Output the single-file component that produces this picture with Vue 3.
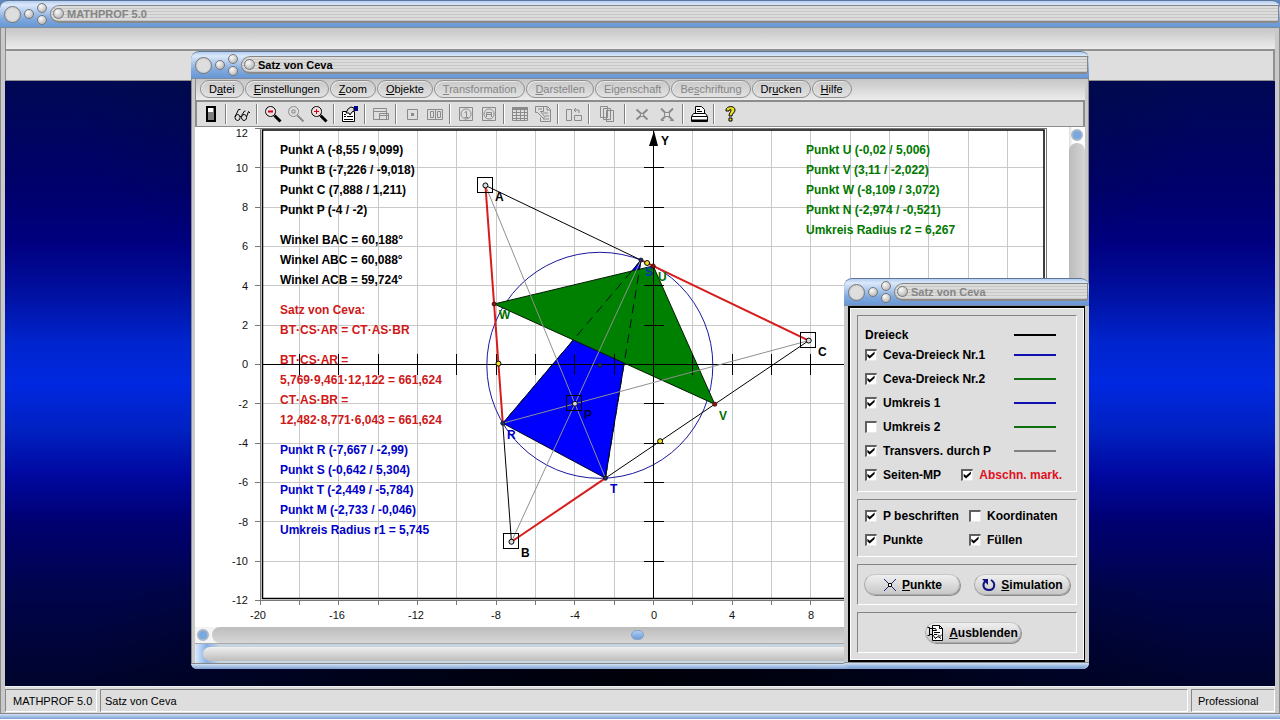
<script setup>
import { computed, ref } from 'vue'

const menus = [
  { pre: 'D', key: 'a', post: 'tei' },
  { pre: '', key: 'E', post: 'instellungen' },
  { pre: '', key: 'Z', post: 'oom' },
  { pre: '', key: 'O', post: 'bjekte' },
  { pre: '', key: 'T', post: 'ransformation', off: true },
  { pre: '', key: 'D', post: 'arstellen', off: true },
  { pre: 'Ei', key: 'g', post: 'enschaft', off: true },
  { pre: 'Be', key: 's', post: 'chriftung', off: true },
  { pre: 'Dr', key: 'u', post: 'cken' },
  { pre: '', key: 'H', post: 'ilfe' },
]

const G = '#8a8a8a'
const K = '#000'
const N = 'none'
// Every icon is a list of [path, stroke, fill, stroke width] on an 18 x 18 grid.
const tools = [
  [{ name: 'Beenden', icon: [['M4 1h10v16H4z', N, K], ['M6 3h6v12H6z', N, '#808080'], ['M6 3h5v4H6z', N, '#fff']] }],
  [{ name: 'Ansicht', icon: [['M4.500 9.500a2.500 3 0 1 0 .1 0zM11 9.500a2.500 3 0 1 0 .1 0zM2 12L5.500 4.500h2M7 12q1-2 1.500 0M8.500 10.500L11.500 6h1M13.500 12L15.500 6.500 17 8', K, N]] }],
  [
    { name: 'Verkleinern', icon: [['M10.500 10.500l6 6', K, N, 3], ['M6.500 1.500a5 5 0 1 0 .1 0z', K, '#f0e0e0', 1], ['M4 6.500h5', '#d00020', N, 2]] },
    { name: 'Zoom', off: true, icon: [['M10.500 10.500l6 6', G, N, 2], ['M6.500 1.500a5 5 0 1 0 .1 0z', G, N], ['M5 5h3v3H5z', G, N]] },
    { name: 'Vergrößern', icon: [['M10.500 10.500l6 6', K, N, 3], ['M6.500 1.500a5 5 0 1 0 .1 0z', K, '#f0e0e0', 1], ['M4 6.500h5M6.500 4v5', '#d00020', N, 1]] },
  ],
  [{ name: 'Eigenschaften', icon: [['M1.500 6.500h12v10h-12z', K, '#fff'], ['M3 9.500h2M6 11.500h6M3 11.500h2M3 14.500h9', K, N], ['M13 1h4v5h-4z', N, '#000090'], ['M5 8l2-4 3-2 3 1v3l-2 1-2 3-1-2z', K, '#dedede']] }],
  [{ name: 'Tabelle', off: true, icon: [['M1.500 3.500h13v11h-13zM1 6.500h14M7.500 8.500h9v6h-9zM7 10.500h10', G, N]] }],
  [
    { name: 'Punkt', off: true, icon: [['M4.500 4.500h10v10h-10z', G, N], ['M8 8h3v3H8z', N, G]] },
    { name: 'Punkte', off: true, icon: [['M1.500 4.500h15v10h-15zM4.500 6.500h3v6h-3zM11.500 6.500h3v6h-3zM9.500 5v9', G, N]] },
  ],
  [
    { name: 'Kreis 1', off: true, icon: [['M2.500 2.500h13v13h-13zM9 4a5 5 0 1 0 .1 0zM7.500 7.500l2-1v5.500M7.500 12.500h4', G, N]] },
    { name: 'Kreis 2', off: true, icon: [['M2.500 2.500h13v13h-13zM9 4a5 5 0 1 0 .1 0zM6.500 12V7.500h5V12M6.500 9.500h5', G, N]] },
  ],
  [
    { name: 'Wertetabelle', off: true, icon: [['M1.500 2.500h15v13h-15z', G, N], ['M1 2h16v3H1z', N, G], ['M1 7.500h16M1 10.500h16M1 13.500h16M5.500 5v11M9.500 5v11M13.500 5v11', G, N]] },
    { name: 'Bericht', off: true, icon: [['M5.500 1.500h8l3 3v12h-10v-4M13 2v3h3M1.500 1.500h8v5h-3l4 5-1 2-6-6H1.500zM4 4h4M9 8h5M11 11h4M9 14h6', G, N]] },
  ],
  [{ name: 'Drehen', off: true, icon: [['M1.500 4.500h5v11h-5zM9.500 10.500h7v5h-7zM11 3l-2 2 2 2M9 5h5v3', G, N]] }],
  [{ name: 'Kopieren', wide: true, off: true, icon: [['M2.500 1.500h7v11h-7zM5.500 3.500h7v11h-7zM8.500 5.500h7v11h-7z', G, '#dedede']] }],
  [
    { name: 'Schnittpunkt', mid: true, off: true, icon: [['M3.500 4.500l11 10M14.500 4.500l-11 10', G, N, 2], ['M7.500 8.500h3v3h-3z', G, '#dedede']] },
    { name: 'Schnittpunkte', mid: true, off: true, icon: [['M3 3.500l12 12M15 3.500l-12 12', G, N, 2], ['M6.500 7.500h5v4h-5z', G, '#dedede'], ['M3 15.500h3M12 15.500h4', G, N]] },
  ],
  [{ name: 'Drucken', icon: [['M5.500 8.500v-7h6l3 3v4', K, '#fff'], ['M7 4.500h3M7 6.500h5', K, N], ['M3.500 8.500h12l2 3v5h-16v-5z', K, '#fff'], ['M2 11.500h15', K, N], ['M2 15.500h15', K, N, 2]] }],
  [{ name: 'Hilfe', icon: [['M5 5c0-4 9-5 9 0 0 3-3 3-3 6H8c0-3 2-4 2-6 0-1-2-1-2 1H5zM8 13h3v3H8z', K, '#e8e020']] }],
]

// Plot transform
const unit = 19.67
const X = (x) => 653.6 + unit * x
const Y = (y) => 364.4 - unit * y
const pt = (x, y) => ({ x: X(x), y: Y(y) })
const A = pt(-8.55, 9.099)
const B = pt(-7.226, -9.018)
const C = pt(7.888, 1.211)
const P = pt(-4, -2)
const R = pt(-7.667, -2.99)
const S = pt(-0.642, 5.304)
const T = pt(-2.449, -5.784)
const U = pt(-0.02, 5.006)
const V = pt(3.11, -2.022)
const W = pt(-8.109, 3.072)
const M = pt(-2.733, -0.046)
const mids = [pt(-7.888, 0.04), pt(0.331, -3.904), pt(-0.331, 5.155)]
const poly = (...p) => p.map((q) => `${q.x},${q.y}`).join(' ')
const evens = Array.from({ length: 19 }, (_, i) => -18 + 2 * i)
const yVals = Array.from({ length: 13 }, (_, i) => -12 + 2 * i)
const xLabels = [-20, -16, -12, -8, -4, 0, 4, 8, 12, 16, 20]

const leftText = [
  [154, '#000', 'Punkt A (-8,55 / 9,099)'],
  [174, '#000', 'Punkt B (-7,226 / -9,018)'],
  [194, '#000', 'Punkt C (7,888 / 1,211)'],
  [214, '#000', 'Punkt P (-4 / -2)'],
  [244, '#000', 'Winkel BAC = 60,188°'],
  [264, '#000', 'Winkel ABC = 60,088°'],
  [284, '#000', 'Winkel ACB = 59,724°'],
  [314, '#d01818', 'Satz von Ceva:'],
  [334, '#d01818', 'BT·CS·AR = CT·AS·BR'],
  [364, '#d01818', 'BT·CS·AR ='],
  [384, '#d01818', '5,769·9,461·12,122 = 661,624'],
  [404, '#d01818', 'CT·AS·BR ='],
  [424, '#d01818', '12,482·8,771·6,043 = 661,624'],
  [454, '#0000c8', 'Punkt R (-7,667 / -2,99)'],
  [474, '#0000c8', 'Punkt S (-0,642 / 5,304)'],
  [494, '#0000c8', 'Punkt T (-2,449 / -5,784)'],
  [514, '#0000c8', 'Punkt M (-2,733 / -0,046)'],
  [534, '#0000c8', 'Umkreis Radius r1 = 5,745'],
]
const rightText = [
  'Punkt U (-0,02 / 5,006)',
  'Punkt V (3,11 / -2,022)',
  'Punkt W (-8,109 / 3,072)',
  'Punkt N (-2,974 / -0,521)',
  'Umkreis Radius r2 = 6,267',
]
const marks = [
  ['A', 495, 201, '#000'], ['B', 521, 557, '#000'], ['C', 818, 356, '#000'],
  ['P', 584, 419, '#000040'], ['R', 507, 439, '#0000c8'], ['S', 645, 276, '#0038b0'],
  ['T', 610, 493, '#0000c8'], ['U', 658, 281, '#007000'], ['V', 719, 420, '#007000'],
  ['W', 499, 319, '#007000'],
]

const options = ref([
  { label: 'Ceva-Dreieck Nr.1', on: true, line: 'blue' },
  { label: 'Ceva-Dreieck Nr.2', on: true, line: 'green' },
  { label: 'Umkreis 1', on: true, line: 'blue' },
  { label: 'Umkreis 2', on: false, line: 'green' },
  { label: 'Transvers. durch P', on: true, line: 'gray' },
])
const sideMid = ref(true)
const sections = ref(true)
const display = ref([
  { label: 'P beschriften', on: true },
  { label: 'Koordinaten', on: false },
  { label: 'Punkte', on: true },
  { label: 'Füllen', on: true },
])
const fillOn = computed(() => display.value[3].on)
</script>

<template>
  <div class="frame">
    <header class="titlebar inactive">
      <button class="orb big" aria-label="Schließen"></button>
      <button class="orb" aria-label="Maximieren"></button>
      <span class="pair"><button class="orb" aria-label="Minimieren"></button><button class="orb" aria-label="Einrollen"></button></span>
      <div class="track"><span class="orb knob"></span><span class="name">MATHPROF 5.0</span></div>
    </header>
    <div class="body">
      <div class="mainmenu"></div>
      <div class="maintools"></div>
      <main class="desk"></main>
      <footer class="status">
        <span class="cell app-name">MATHPROF 5.0</span>
        <span class="cell doc">Satz von Ceva</span>
        <span class="cell edition">Professional</span>
      </footer>
    </div>
    <div class="base"></div>

    <section class="window child">
      <header class="titlebar">
        <button class="orb big" aria-label="Schließen"></button>
        <button class="orb" aria-label="Maximieren"></button>
        <span class="pair"><button class="orb" aria-label="Minimieren"></button><button class="orb" aria-label="Einrollen"></button></span>
        <div class="track"><span class="orb knob"></span><span class="name">Satz von Ceva</span></div>
      </header>
      <div class="body">
        <nav class="menu">
          <button v-for="m in menus" :key="m.pre + m.key + m.post" :disabled="m.off">{{ m.pre }}<u>{{ m.key }}</u>{{ m.post }}</button>
        </nav>
        <div class="tools">
          <div v-for="(group, g) in tools" :key="g" class="group">
            <button v-for="t in group" :key="t.name" :aria-label="t.name" :disabled="t.off" :class="{ wide: t.wide, mid: t.mid }">
              <svg viewBox="0 0 18 18" width="18" height="18">
                <path v-for="(p, i) in t.icon" :key="i" :d="p[0]" :stroke="p[1]" :fill="p[2]" :stroke-width="p[3] || 1" />
              </svg>
            </button>
          </div>
        </div>
        <div class="view">
          <svg class="plot" viewBox="195 127 874 499" preserveAspectRatio="xMinYMin meet">
            <g stroke="#c9c9c9" shape-rendering="crispEdges">
              <line v-for="v in evens" :key="'v' + v" :x1="X(v)" :x2="X(v)" y1="130" y2="599" />
              <line v-for="v in yVals.slice(1, -1)" :key="'h' + v" x1="262" x2="1044" :y1="Y(v)" :y2="Y(v)" />
            </g>
            <g stroke="#777" shape-rendering="crispEdges" fill="none">
              <path d="M260.500 128.500H1046.500V600.500H260.500z" />
              <path v-for="v in yVals" :key="'a' + v" :d="`M255 ${Y(v)}H261`" />
              <path v-for="v in [-20, ...evens, 20]" :key="'b' + v" :d="`M${X(v)} 600V605`" />
            </g>
            <path d="M262.500 130H1044V598.500H262.500z" fill="none" stroke="#000" stroke-width="1.500" />
            <circle :cx="M.x" :cy="M.y" :r="5.745 * unit" fill="none" stroke="#1818a0" />
            <polygon :points="poly(R, S, T)" :fill="fillOn ? '#0000ff' : 'none'" stroke="#000020" />
            <polygon :points="poly(U, V, W)" :fill="fillOn ? '#008000' : 'none'" stroke="#001800" />
            <path :d="`M${S.x} ${S.y}L${R.x} ${R.y}M${S.x} ${S.y}L${T.x} ${T.y}`" stroke="#001020" stroke-dasharray="9 6" />
            <g stroke="#000" shape-rendering="crispEdges">
              <path :d="`M262 ${Y(0)}H1044M${X(0)} 131V599`" />
              <path v-for="v in evens" :key="'t' + v" :d="`M${X(v)} 354V375`" />
              <path v-for="v in yVals.slice(1, -1)" :key="'u' + v" :d="`M644 ${Y(v)}H664`" />
            </g>
            <path d="M654 131l-5 15h9z" />
            <g stroke="#909090">
              <path :d="`M${A.x} ${A.y}L${T.x} ${T.y}M${B.x} ${B.y}L${S.x} ${S.y}M${C.x} ${C.y}L${R.x} ${R.y}`" />
            </g>
            <path :d="`M${A.x} ${A.y}L${S.x} ${S.y}M${C.x} ${C.y}L${T.x} ${T.y}M${R.x} ${R.y}L${B.x} ${B.y}`" stroke="#000" />
            <path :d="`M${A.x} ${A.y}L${R.x} ${R.y}M${C.x} ${C.y}L${S.x} ${S.y}M${B.x} ${B.y}L${T.x} ${T.y}`" stroke="#d81c1c" stroke-width="2" />
            <g fill="none" stroke="#000" shape-rendering="crispEdges">
              <rect v-for="(p, i) in [A, B, C, P]" :key="i" :x="p.x - 8" :y="p.y - 8" width="15" height="15" />
            </g>
            <g stroke="#000">
              <circle v-for="(p, i) in [A, B, C, P]" :key="'p' + i" :cx="p.x" :cy="p.y" r="2.500" fill="#d8d8d8" />
              <circle v-for="(p, i) in mids" :key="'m' + i" :cx="p.x" :cy="p.y" r="2.500" fill="#f0e020" />
              <circle v-for="(p, i) in [U, V, W]" :key="'u' + i" :cx="p.x" :cy="p.y" r="2" fill="#901010" stroke="#501010" />
              <circle v-for="(p, i) in [R, S, T, M]" :key="'r' + i" :cx="p.x" :cy="p.y" r="2" fill="#203060" stroke="#101830" />
            </g>
            <g class="bold">
              <text x="661" y="145">Y</text>
              <text v-for="m in marks" :key="m[0]" :x="m[1]" :y="m[2]" :fill="m[3]">{{ m[0] }}</text>
              <text v-for="t in leftText" :key="t[0]" x="280" :y="t[0]" :fill="t[1]">{{ t[2] }}</text>
              <text v-for="(t, i) in rightText" :key="t" x="806" :y="154 + 20 * i" fill="#007800">{{ t }}</text>
            </g>
            <g class="scale">
              <text v-for="v in yVals" :key="'yl' + v" x="248" :y="v === 12 ? 137 : Math.round(Y(v)) + 4" text-anchor="end">{{ v }}</text>
              <text v-for="v in xLabels" :key="'xl' + v" :x="Math.round(X(v)) + (v < -8 ? -2 : 0)" y="619" text-anchor="middle">{{ v }}</text>
            </g>
          </svg>
          <div class="vscroll"><button class="ball" aria-label="Nach oben"></button><div class="rail"></div></div>
        </div>
        <div class="hscroll"><button class="ball" aria-label="Nach links"></button><div class="rail"><span class="thumb"></span></div></div>
        <div class="foot"><div></div></div>
      </div>
      <div class="base"></div>
    </section>

    <section class="window dialog">
      <header class="titlebar inactive">
        <button class="orb big" aria-label="Schließen"></button>
        <button class="orb" aria-label="Maximieren"></button>
        <span class="pair"><button class="orb" aria-label="Minimieren"></button><button class="orb" aria-label="Einrollen"></button></span>
        <div class="track"><span class="orb knob"></span><span class="name">Satz von Ceva</span></div>
      </header>
      <div class="panel">
        <div class="box choices">
          <div class="line first"><span>Dreieck</span><i class="black"></i></div>
          <div v-for="o in options" :key="o.label" class="line">
            <label><input v-model="o.on" type="checkbox" />{{ o.label }}</label><i :class="o.line"></i>
          </div>
          <div class="line last">
            <label><input v-model="sideMid" type="checkbox" />Seiten-MP</label>
            <label class="red"><input v-model="sections" type="checkbox" />Abschn. mark.</label>
          </div>
        </div>
        <div class="box display">
          <label v-for="o in display" :key="o.label"><input v-model="o.on" type="checkbox" />{{ o.label }}</label>
        </div>
        <div class="box actions">
          <button class="push">
            <svg viewBox="0 0 16 16" width="16" height="16"><path d="M2 2l12 12M14 2L2 14" stroke="#202080" fill="none" /><path d="M6.500 6.500h3v3h-3z" stroke="#000" fill="#fff" /></svg>
            <span><u>P</u>unkte</span>
          </button>
          <button class="push">
            <svg viewBox="0 0 16 16" width="16" height="16"><path d="M4.500 4C1 7 2 13 8 13S15 6 10 3" stroke="#101080" stroke-width="2" fill="none" /><path d="M1 2h6v6z" fill="#101080" /></svg>
            <span><u>S</u>imulation</span>
          </button>
        </div>
        <div class="box hide">
          <button class="push">
            <svg viewBox="0 0 18 18" width="18" height="18"><path d="M5.500 1.500h7l3 3v12h-10z" stroke="#000" fill="#fff" /><path d="M12.500 1.500v3h3M.500 3.500h2v8h-2M2.500 4.500h6l1 2h-4M2.500 10.500h3l3 4M7 8.500h6M7 10.500h3M11 10.500l2 2 2-2M8 14.500l3-2 3 2" stroke="#000" fill="none" /></svg>
            <span><u>A</u>usblenden</span>
          </button>
        </div>
      </div>
      <div class="base"></div>
    </section>
  </div>
</template>

<style>
html, body { margin: 0; background: #6088c0; }
</style>

<style scoped>
* { box-sizing: border-box; }
.frame {
  position: relative;
  display: flex;
  flex-direction: column;
  height: 100vh;
  min-height: 720px;
  overflow: hidden;
  border-bottom: 1px solid #fff;
  font: 11px "Liberation Sans", Arial, sans-serif;
  color: #000;
}
button { font: inherit; color: inherit; padding: 0; margin: 0; border: 0; background: none; }
.titlebar {
  display: flex;
  align-items: center;
  flex: none;
  gap: 3px;
  height: 28px;
  padding-left: 4px;
  padding-right: 1px;
  border-top: 1px solid #5d7699;
  border-bottom: 1px solid #7d8ca0;
  border-radius: 8px 8px 0 0;
  background: linear-gradient(#b4cdee, #dce9fa 4px, #b9d1f1 9px, #7fa8de 18px, #6595d3 27px);
}
.orb {
  flex: none;
  display: block;
  width: 10px;
  height: 10px;
  border: 1px solid #777;
  border-radius: 50%;
  background: radial-gradient(circle at 35% 30%, #fafafa, #c9c9c9 60%, #999);
}
.orb.big { width: 17px; height: 17px; background: radial-gradient(circle, #dedede 50%, #b8b8b8); }
.pair { display: flex; flex-direction: column; gap: 2px; }
.track {
  flex: 1;
  display: flex;
  align-items: center;
  gap: 3px;
  height: 18px;
  padding-left: 2px;
  border: 1px solid #858585;
  border-bottom: 2px solid #8a8a8a;
  border-radius: 9px 0 3px 9px;
  background: repeating-linear-gradient(#dcdcdc 0 2px, #c6c6c6 2px 3px);
}
.knob { width: 11px; height: 11px; }
.name { font-weight: bold; line-height: 14px; }
.inactive .name { color: #858585; }
.body {
  flex: 1;
  display: flex;
  flex-direction: column;
  min-height: 0;
  border: solid #8a8a8a;
  border-width: 0 1px;
  background: #c9c9c9;
  padding: 0 4px;
}
.base { flex: none; height: 6px; border-top: 1px solid #888; background: linear-gradient(#d3e2f4, #7ba0d3); }
.mainmenu { height: 21px; background: linear-gradient(#c6c6c6, #ececec); border-left: 1px solid #888; }
.maintools { height: 32px; background: #dedede; border: 2px solid #909090; border-width: 2px 2px 1px 1px; }
.desk {
  flex: 1;
  background:
    radial-gradient(ellipse 45% 36% at 50% 100%, rgba(0, 0, 0, .85), transparent),
    radial-gradient(ellipse 45% 45% at 50% 0%, rgba(0, 20, 20, .6), transparent),
    linear-gradient(#000854, #00006c 18%, #000080 27%, #0010a0 35%, #0024cc 43%, #0028e0 50%, #0020c0 58%, #0008a0 65%, #000070 73%, #00044c 84%, #00042c);
}
.status { display: flex; gap: 3px; height: 27px; padding: 2px 0 1px; background: #dedede; border-top: 1px solid #eee; }
.cell { border: 1px solid #fff; border-top-color: #888; border-left-color: #888; line-height: 22px; padding-left: 4px; }
.app-name { width: 92px; padding-left: 7px; }
.doc { flex: 1; }
.edition { width: 84px; padding-left: 6px; }

.window { position: absolute; display: flex; flex-direction: column; background: #c9c9c9; border-radius: 8px 8px 6px 6px; overflow: hidden; }
.child { left: 191px; right: 191px; top: 51px; bottom: 50px; }
.child .body { padding: 0 3px; }
.menu { display: flex; gap: 1px; height: 21px; padding: 1px 0 1px 4px; background: linear-gradient(#c6c6c6, #ececec); border-left: 1px solid #888; }
.menu button {
  height: 18px;
  padding: 0 8px;
  border: 1px solid #8f8f8f;
  border-radius: 9px;
  background: linear-gradient(#c9c9c9, #e2e2e2);
  box-shadow: inset 1px 1px #e8e8e8;
  line-height: 15px;
}
.menu button:disabled { color: #858585; }
.tools { display: flex; align-items: center; height: 27px; padding-left: 2px; border: 2px solid #8c8c8c; border-width: 2px 2px 1px; background: #dedede; flex: none; }
.group { display: flex; }
.group + .group { border-left: 1px solid #808080; box-shadow: inset 1px 0 #fff; padding-left: 4px; margin-left: 3px; }
.tools button { display: flex; align-items: center; justify-content: center; width: 23px; height: 20px; }
.tools button.wide { width: 28px; }
.tools button.mid { width: 25px; }
.tools svg { display: block; }
.view { flex: 1; display: flex; min-height: 0; background: #fff; }
.plot { flex: 1; min-width: 0; display: block; }
.bold { font-size: 12px; font-weight: bold; }
.scale { font-size: 11px; fill: #111; }
.vscroll { display: flex; flex-direction: column; align-items: center; gap: 2px; width: 16px; padding-top: 2px; background: linear-gradient(90deg, #ddd, #fff 4px); }
.ball { flex: none; width: 12px; height: 12px; border: 2px solid #a9b6c6; border-radius: 50%; background: #78a8e0; }
.rail { background: linear-gradient(#bdbdbd, #d6d6d6); }
.vscroll .rail { flex: 1; width: 16px; border-radius: 8px 8px 0 0; background: linear-gradient(90deg, #bbb, #d6d6d6); }
.hscroll { display: flex; align-items: center; gap: 3px; height: 17px; padding-left: 2px; background: #f4f4f4; border-bottom: 1px solid #aaa; flex: none; }
.hscroll .rail { flex: 1; height: 16px; border-radius: 8px 0 0 8px; display: flex; align-items: center; justify-content: center; padding-right: 22px; }
.thumb { width: 13px; height: 10px; border: 1px solid #8da4c0; border-radius: 5px; background: linear-gradient(#a8ccf4, #6f9fd8); }
.foot { flex: none; height: 19px; padding: 3px 0 2px 8px; background: linear-gradient(90deg, #dcebfb, #84b0e6 12px, #c8d4e0 24px); }
.foot div { height: 14px; border-radius: 7px 0 0 7px; background: linear-gradient(#f0f0f0, #bcbcbc); }

.dialog { right: 191px; bottom: 51px; width: 245px; font-size: 12px; font-weight: bold; }
.dialog .name { font-size: 11px; }
.panel {
  display: flex;
  flex-direction: column;
  gap: 7px;
  margin: 0 4px;
  padding: 7px;
  border: 2px solid #000;
  border-right-width: 1px;
  background: #dedede;
  box-shadow: inset 1px 1px #fff, inset -1px -1px #fff;
}
.box { border: 1px solid #fff; border-top-color: #858585; border-left-color: #858585; padding: 0 7px; }
.choices { padding-top: 10px; padding-bottom: 4px; }
.line { display: flex; align-items: center; justify-content: space-between; height: 24px; padding-right: 13px; }
.line.first { height: 17px; }
.line i { width: 42px; height: 2px; background: #000; }
.line i.blue { background: #1010b0; }
.line i.green { background: #107010; }
.line i.gray { background: #808080; }
.line.last { padding-right: 7px; }
label { display: flex; align-items: center; gap: 6px; line-height: 14px; }
.red { color: #e01020; }
input {
  appearance: none;
  position: relative;
  width: 12px;
  height: 12px;
  margin: 0;
  background: #fff;
  border: 1px solid #e8e8e8;
  border-top: 2px solid #606060;
  border-left: 2px solid #606060;
}
input:checked::before {
  content: "";
  display: block;
  width: 8px;
  height: 8px;
  background: #000;
  clip-path: polygon(5% 35%, 35% 60%, 95% 5%, 95% 38%, 35% 95%, 5% 68%);
}
.display { display: grid; grid-template-columns: 104px 1fr; padding-top: 4px; padding-bottom: 4px; grid-auto-rows: 24px; }
.actions { display: flex; justify-content: space-between; align-items: center; height: 41px; padding: 0 6px; }
.hide { display: flex; justify-content: center; align-items: center; height: 41px; padding-left: 18px; }
.push {
  display: flex;
  align-items: center;
  justify-content: center;
  gap: 4px;
  width: 96px;
  height: 21px;
  border: 1px solid #aaa;
  border-top-color: #c8c8c8;
  border-radius: 11px;
  background: linear-gradient(#efefef, #c8c8c8);
  box-shadow: 1px 1px #8c8c8c;
}
.push svg { flex: none; }
</style>
